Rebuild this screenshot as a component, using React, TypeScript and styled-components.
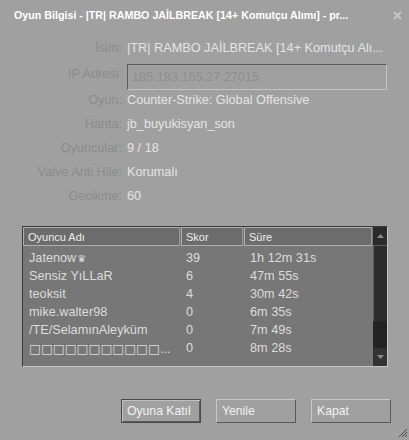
import React from "react";
import styled, { createGlobalStyle } from "styled-components";

const Global = createGlobalStyle`
  html, body { margin: 0; padding: 0; background: #a0a0a0; }
  body { font-family: "Liberation Sans", Arial, sans-serif; }
`;

const Window = styled.div`
  position: relative;
  width: 409px;
  height: 440px;
  background: #a0a0a0;
  box-sizing: border-box;
  overflow: hidden;
`;

const TitleBar = styled.div`
  display: flex;
  align-items: center;
  justify-content: space-between;
  height: 30px;
  padding: 0 7px 0 14px;
`;

const Title = styled.div`
  color: #ffffff;
  font-weight: bold;
  font-size: 10.7px;
  white-space: nowrap;
`;

const Close = styled.svg`
  width: 9px;
  height: 9px;
`;

const InfoGrid = styled.div`
  display: grid;
  grid-template-columns: 122px 260px;
  grid-template-rows: 24px 28px repeat(5, 24px);
  column-gap: 5px;
  padding-top: 6px;
  font-size: 12.7px;
`;

const Label = styled.div`
  color: #8b8b8b;
  text-align: right;
  align-self: center;
  white-space: nowrap;
`;

const Value = styled.div`
  color: #e4e4e4;
  align-self: center;
  white-space: nowrap;
`;

const IpBox = styled.div`
  align-self: end;
  margin-bottom: -2px;
  height: 26px;
  box-sizing: border-box;
  display: flex;
  align-items: center;
  padding-left: 4px;
  color: #8e8e8e;
  border-top: 1px solid #5c5c5c;
  border-left: 1px solid #5c5c5c;
  border-right: 1px solid #c4c4c4;
  border-bottom: 1px solid #c4c4c4;
`;

const List = styled.div`
  margin: 18px 0 0 22px;
  width: 366px;
  height: 141px;
  box-sizing: border-box;
  border-top: 1px solid #3a3a3a;
  border-left: 1px solid #3a3a3a;
  border-right: 1px solid #c6c6c6;
  border-bottom: 1px solid #c6c6c6;
  background: #777777;
  display: flex;
`;

const Table = styled.div`
  flex: 1;
  display: flex;
  flex-direction: column;
`;

const HeaderRow = styled.div`
  display: grid;
  grid-template-columns: 158px 63px 1fr;
  height: 19px;
`;

const HeaderCell = styled.div`
  box-sizing: border-box;
  border: 1px solid #b0b0b0;
  border-right-color: #9a9a9a;
  background: #6c6c6c;
  color: #ececec;
  font-size: 11px;
  display: flex;
  align-items: center;
  padding-left: 4px;
  margin-right: 1px;
`;

const Rows = styled.div`
  padding-top: 3px;
`;

const Row = styled.div`
  display: grid;
  grid-template-columns: 157px 64px 1fr;
  height: 18px;
  align-items: center;
  color: #dcdcdc;
  font-size: 12.7px;
  padding-left: 6px;
  white-space: nowrap;
`;

const Boxes = styled.span`
  font-family: "DejaVu Sans", sans-serif;
  font-size: 12.6px;
`;

const Scroll = styled.div`
  width: 14px;
  background: #232323;
  display: flex;
  flex-direction: column;
`;

const ScrollBtn = styled.div<{ $down?: boolean }>`
  height: 18px;
  background: ${(p) => (p.$down ? "#323232" : "#2b2b2b")};
  display: flex;
  align-items: center;
  justify-content: center;
  margin-top: ${(p) => (p.$down ? "auto" : "0")};
`;

const Thumb = styled.div`
  height: 76px;
  background: #2c2c2c;
  border-top: 1px solid #5e5e5e;
  border-left: 1px solid #5e5e5e;
  box-sizing: border-box;
`;

const Buttons = styled.div`
  display: flex;
  gap: 15px;
  margin: 32px 0 0 121px;
`;

const Button = styled.button<{ $default?: boolean }>`
  width: 80px;
  height: 24px;
  box-sizing: border-box;
  background: #a0a0a0;
  color: #f2f2f2;
  font-family: "Liberation Sans", Arial, sans-serif;
  font-size: 12.2px;
  text-align: left;
  white-space: nowrap;
  padding: 0 0 0 5px;
  border: 1px solid;
  border-color: ${(p) =>
    p.$default ? "#4a4a4a" : "#c8c8c8 #5a5a5a #5a5a5a #c8c8c8"};
  box-shadow: ${(p) =>
    p.$default ? "inset 1px 1px #c0c0c0, inset -1px -1px #5a5a5a" : "none"};
`;

const Grip = styled.svg`
  position: absolute;
  right: 2px;
  bottom: 3px;
  width: 9px;
  height: 9px;
`;

const Crown = styled.span`
  font-family: "DejaVu Sans", sans-serif;
  font-size: 10px;
  margin-left: 1px;
`;

const players = [
  { name: "Jatenow", crown: true, score: "39", time: "1h 12m 31s" },
  { name: "Sensiz YıLLaR", score: "6", time: "47m 55s" },
  { name: "teoksit", score: "4", time: "30m 42s" },
  { name: "mike.walter98", score: "0", time: "6m 35s" },
  { name: "/TE/SelamınAleyküm", score: "0", time: "7m 49s" },
  { name: "□□□□□□□□□□□", boxes: true, score: "0", time: "8m 28s" },
];

const info: [string, string][] = [
  ["İsim:", "|TR| RAMBO JAİLBREAK [14+ Komutçu Alı..."],
  ["IP Adresi:", "185.193.165.27:27015"],
  ["Oyun:", "Counter-Strike: Global Offensive"],
  ["Harita:", "jb_buyukisyan_son"],
  ["Oyuncular:", "9 / 18"],
  ["Valve Anti Hile:", "Korumalı"],
  ["Gecikme:", "60"],
];

export default function App() {
  return (
    <Window>
      <Global />
      <TitleBar>
        <Title>Oyun Bilgisi - |TR| RAMBO JAİLBREAK [14+ Komutçu Alımı] - pr...</Title>
        <Close viewBox="0 0 9 9">
          <path d="M1 1 L8 8 M8 1 L1 8" stroke="#c6c6c6" strokeWidth="2" />
        </Close>
      </TitleBar>
      <InfoGrid>
        {info.map(([l, v]) => (
          <React.Fragment key={l}>
            <Label>{l}</Label>
            {l === "IP Adresi:" ? <IpBox>{v}</IpBox> : <Value>{v}</Value>}
          </React.Fragment>
        ))}
      </InfoGrid>
      <List>
        <Table>
          <HeaderRow>
            <HeaderCell>Oyuncu Adı</HeaderCell>
            <HeaderCell>Skor</HeaderCell>
            <HeaderCell>Süre</HeaderCell>
          </HeaderRow>
          <Rows>
            {players.map((p) => (
              <Row key={p.name + p.time}>
                <span>
                  {p.boxes ? (
                    <>
                      <Boxes>{p.name}</Boxes>...
                    </>
                  ) : (
                    p.name
                  )}
                  {p.crown && <Crown>♛</Crown>}
                </span>
                <span>{p.score}</span>
                <span>{p.time}</span>
              </Row>
            ))}
          </Rows>
        </Table>
        <Scroll>
          <ScrollBtn>
            <svg width="7" height="4" viewBox="0 0 7 4">
              <path d="M0 4 L3.5 0 L7 4 Z" fill="#8a8a8a" />
            </svg>
          </ScrollBtn>
          <Thumb />
          <ScrollBtn $down>
            <svg width="7" height="4" viewBox="0 0 7 4">
              <path d="M0 0 L3.5 4 L7 0 Z" fill="#8a8a8a" />
            </svg>
          </ScrollBtn>
        </Scroll>
      </List>
      <Buttons>
        <Button $default>Oyuna Katıl</Button>
        <Button>Yenile</Button>
        <Button>Kapat</Button>
      </Buttons>
      <Grip viewBox="0 0 9 9">
        <path d="M9 1 L1 9 M9 4 L4 9 M9 7 L7 9" stroke="#4a4a4a" strokeWidth="1" />
      </Grip>
    </Window>
  );
}
